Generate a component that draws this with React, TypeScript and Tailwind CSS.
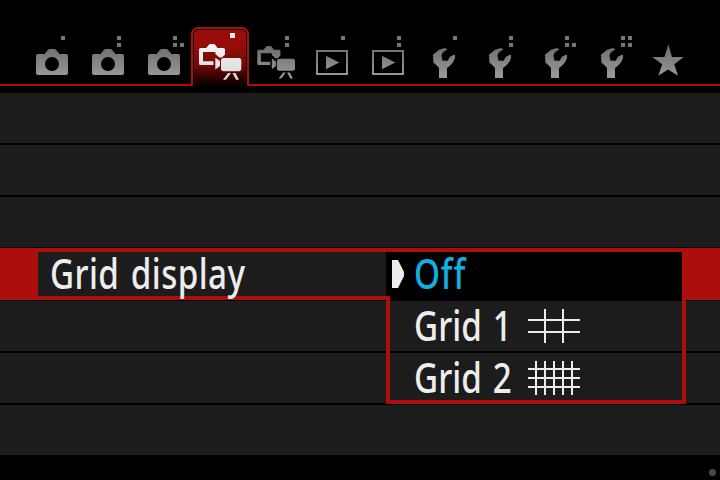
import React from "react";

type IconKind = "camera" | "live" | "liveActive" | "play" | "wrench" | "star";
type Dot = [number, number];

const A: Dot = [37, 36];
const B: Dot = [37, 43];
const C: Dot = [44, 43];

const tabs: { kind: IconKind; dots: Dot[] }[] = [
  { kind: "camera", dots: [A] },
  { kind: "camera", dots: [A, B] },
  { kind: "camera", dots: [A, B, C] },
  { kind: "liveActive", dots: [] },
  { kind: "live", dots: [A, B] },
  { kind: "play", dots: [A] },
  { kind: "play", dots: [A, B] },
  { kind: "wrench", dots: [A] },
  { kind: "wrench", dots: [A, B] },
  { kind: "wrench", dots: [A, B, C] },
  { kind: "wrench", dots: [A, [44, 36], B, C] },
  { kind: "star", dots: [] },
];

function LiveShape() {
  return (
    <g>
      <path
        fillRule="evenodd"
        d="M8.5 48H14.2L17 44.6Q17.6 44 18.4 44H21.6Q22.4 44 23 44.6L25.6 48H31.5Q33 48 33 49.5V54.5L30 57.4H27.4L23.4 54V52H11V61.3H21.5V65H8.5Q7 65 7 63.5V49.5Q7 48 8.5 48Z"
      />
      <path d="M23.3 57.8L28 61V66L23.3 69.6Z" />
      <rect x="29" y="58" width="20.3" height="13.2" rx="2.6" />
      <path d="M36 73H39L34 79.8H31Z M40.5 73H43.5L47 79.8H44Z" />
    </g>
  );
}

function Shape({ kind }: { kind: IconKind }) {
  switch (kind) {
    case "camera":
      return (
        <path
          fillRule="evenodd"
          d="M14 54H20.5L23.8 50Q24.6 49 26 49H30Q31.4 49 32.2 50L35.5 54H42Q44 54 44 56V73Q44 75 42 75H14Q12 75 12 73V56Q12 54 14 54ZM28 57A7 7 0 1 0 28 71A7 7 0 1 0 28 57Z"
        />
      );
    case "live":
      return (
        <g transform="matrix(0.891 0 0 0.91 3.06 5.96)">
          <LiveShape />
        </g>
      );
    case "liveActive":
      return <LiveShape />;
    case "play":
      return <path fillRule="evenodd" d="M12 50H44V75H12ZM14 52V73H42V52ZM22 55.7L35.2 62.5L22 69.3Z" />;
    case "wrench":
      return (
        <path d="M29 48L31.4 49.2L26.6 52.8L25.4 55.5L26.4 60.4L31.6 60.8L33.8 57L36.6 55.2L39 54.8V58Q38 62 34.5 65.2L31 68V78H23V68L20.5 65.3L17.4 62.6L17 54.6L23.5 49.6Z" />
      );
    case "star":
      return (
        <path d="M28.3 44.3L32 57H43.8L34.2 64.2L38 75.7L28.1 69.6L18.3 75.7L22.2 64.2L12.3 57H24.5Z" />
      );
  }
}

function TabIcon({ kind, dots, id }: { kind: IconKind; dots: Dot[]; id: string }) {
  const active = kind === "liveActive";
  return (
    <svg width="56" height="84" viewBox="0 0 56 84" className="relative block shrink-0">
      <defs>
        <linearGradient id={id} gradientUnits="userSpaceOnUse" x1="0" y1="45" x2="0" y2="78">
          <stop offset="0" stopColor={active ? "#f4f4f4" : "#6c6c6c"} />
          <stop offset="1" stopColor={active ? "#d8d8d8" : "#9a9a9a"} />
        </linearGradient>
      </defs>
      <g fill={`url(#${id})`}>
        <Shape kind={kind} />
      </g>
      {active && <rect x="38" y="33" width="5" height="5" fill="#ededed" />}
      {dots.map(([x, y]) => (
        <rect key={`${x}-${y}`} x={x} y={y} width="4" height="4" fill="#767676" />
      ))}
    </svg>
  );
}

function GridIcon({ rows, cols }: { rows: number[]; cols: number[] }) {
  return (
    <svg width="52" height="34" viewBox="0 0 52 34" fill="#ededed" className="block">
      {rows.map((y) => (
        <rect key={`r${y}`} x="0" y={y} width="52" height="2" />
      ))}
      {cols.map((x) => (
        <rect key={`c${x}`} x={x} y="0" width="2" height="34" />
      ))}
    </svg>
  );
}

const textBase =
  "block w-max origin-left scale-x-[0.81] whitespace-pre text-[41px] leading-[42px] font-medium [font-family:'Noto_Sans','Open_Sans',sans-serif]";

export default function App() {
  return (
    <div className="flex h-[480px] w-[720px] flex-col overflow-hidden bg-black text-[#ededed]">
      <nav className="flex h-[86px] shrink-0 border-b-2 border-[#ac0f0b] pl-6">
        {tabs.map((t, i) =>
          t.kind === "liveActive" ? (
            <div key={i} className="relative h-[86px] w-14 shrink-0">
              <div className="absolute -left-px top-[27px] h-[59px] w-[58px] rounded-t-[7px] border-x-2 border-t-2 border-[#ac0f0b] bg-black px-px pt-px">
                <div className="h-full rounded-t-[4px] bg-linear-to-b from-[#980d0b] from-25% via-[#700a08] via-65% to-[#080000] to-100%" />
              </div>
              <TabIcon kind={t.kind} dots={t.dots} id={`tab${i}`} />
            </div>
          ) : (
            <TabIcon key={i} kind={t.kind} dots={t.dots} id={`tab${i}`} />
          ),
        )}
      </nav>

      <main className="mt-[7px] flex flex-col">
        <div className="h-[52px] border-b-2 border-black bg-[#1c1c1c]" />
        <div className="h-[52px] border-b-2 border-black bg-[#1c1c1c]" />
        <div className="h-[51px] border-b border-black bg-[#1c1c1c]" />

        <div className="relative z-10 flex h-[52px] bg-[#ac0f0b] pl-[38px] pt-1">
          <div className="h-11 w-[348px] bg-[#1c1c1c] pl-3">
            <span className={`${textBase} tracking-[0.5px] [word-spacing:3px]`}>Grid display</span>
          </div>
          <div className="absolute left-[386px] top-1 w-[300px]">
            <div className="flex h-11 w-[296px] bg-black pl-1.5">
              <svg width="12" height="28" viewBox="0 0 12 28" className="mt-2 block" fill="#ededed">
                <path d="M0 0H6L12 12V16L6 28H0Z" />
              </svg>
              <span className={`${textBase} ml-2.5 tracking-[1px] text-[#14aee0]`}>Off</span>
            </div>
            <div className="h-[108px] border-x-4 border-b-4 border-[#ac0f0b]">
              <div className="h-[5px] bg-black" />
              <div className="flex h-[52px] pl-6">
                <div className="w-[114px] pt-[3px]">
                  <span className={`${textBase} [word-spacing:3px]`}>Grid 1</span>
                </div>
                <div className="pt-2">
                  <GridIcon rows={[10, 22]} cols={[16, 34]} />
                </div>
              </div>
              <div className="flex h-[47px] pl-6">
                <div className="w-[114px] pt-[3px]">
                  <span className={`${textBase} [word-spacing:3px]`}>Grid 2</span>
                </div>
                <div className="pt-2">
                  <GridIcon rows={[7, 16, 25]} cols={[7, 16, 25, 34, 43]} />
                </div>
              </div>
            </div>
          </div>
        </div>

        <div className="h-[53px] border-b-2 border-t border-black bg-[#1c1c1c]" />
        <div className="h-[52px] border-b-2 border-black bg-[#1c1c1c]" />
        <div className="h-[50px] bg-[#1c1c1c]" />
      </main>

      <footer className="flex justify-end pr-1 pt-[14px]">
        <div className="size-[7px] rounded-full bg-[#484848]" />
      </footer>
    </div>
  );
}
